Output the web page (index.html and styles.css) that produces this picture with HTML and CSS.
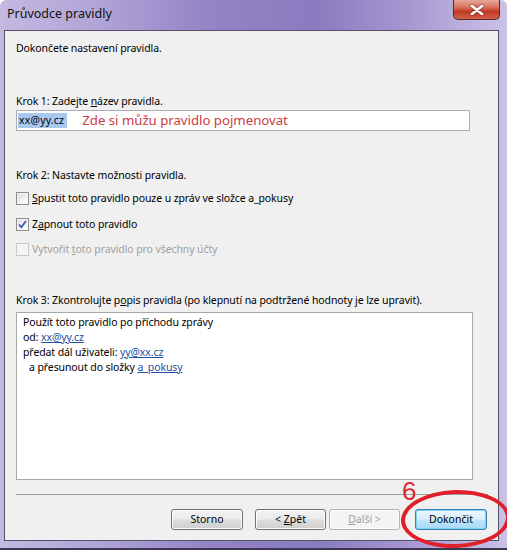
FILE: index.html
```html
<!DOCTYPE html>
<html lang="cs">
<head>
<meta charset="utf-8">
<title>Průvodce pravidly</title>
<link rel="stylesheet" href="styles.css">
</head>
<body>
<div class="window">
  <div class="titlebar">
    <span class="title">Průvodce pravidly</span>
    <span class="close"><svg viewBox="0 0 14 10" width="14" height="10"><path d="M2 1 L12 9 M12 1 L2 9" stroke="#fff" stroke-width="2.6" stroke-linecap="round"/></svg></span>
  </div>
  <div class="client">
    <div class="intro">Dokončete nastavení pravidla.</div>
    <div class="label l1">Krok 1: Zadejte <u>n</u>ázev pravidla.</div>
    <div class="input">
      <span class="sel">xx@yy.cz</span>
      <span class="note">Zde si můžu pravidlo pojmenovat</span>
    </div>
    <div class="label l2">Krok 2: Nastavte možnosti pravidla.</div>
    <div class="cbrow r1"><span class="cb"></span><span><u>S</u>pustit toto pravidlo pouze u zpráv ve složce a_pokusy</span></div>
    <div class="cbrow r2"><span class="cb checked"><svg viewBox="0 0 13 13" width="13" height="13"><path d="M3 6.5 L5.3 9.3 L10 3" fill="none" stroke="#3b5ea8" stroke-width="1.8"/></svg></span><span>Z<u>a</u>pnout toto pravidlo</span></div>
    <div class="cbrow r3 disabled"><span class="cb"></span><span>Vytvořit <u>t</u>oto pravidlo pro všechny účty</span></div>
    <div class="label l3">Krok 3: Zkontrolujte p<u>o</u>pis pravidla (po klepnutí na podtržené hodnoty je lze upravit).</div>
    <div class="desc">
      <div>Použít toto pravidlo po příchodu zprávy</div>
      <div>od: <a class="lnk">xx@yy.cz</a></div>
      <div>předat dál uživateli: <a class="lnk">yy@xx.cz</a></div>
      <div class="ind">a přesunout do složky <a class="lnk">a_pokusy</a></div>
    </div>
    <div class="sep"></div>
    <div class="buttons">
      <span class="btn storno">Storno</span>
      <span class="btn zpet">&lt; <u>Z</u>pět</span>
      <span class="btn dalsi"><u>D</u>alší &gt;</span>
      <span class="btn finish">Dokončit</span>
    </div>
  </div>
  <div class="mark6">6</div>
  <div class="ellipse"></div>
</div>
</body>
</html>
```
FILE: styles.css
```css
* { box-sizing: border-box; }
html, body { margin: 0; padding: 0; }
body {
  width: 507px;
  height: 550px;
  overflow: hidden;
  background: #ffffff;
  font-family: "Noto Sans", "Open Sans", sans-serif;
  font-size: 10.5px;
  letter-spacing: -0.1px;
  color: #000;
}
.window {
  position: relative;
  width: 507px;
  height: 550px;
  background: linear-gradient(90deg, #c4b9e0 0%, #b0a3d6 20%, #9585c6 40%, #8a7abf 62%, #a596d0 80%, #cbc2e6 100%);
  border-radius: 6px 6px 0 0;
  border-bottom: 2px solid #3a3550;
  padding: 0 8px 7px 4px;
  display: flex;
  flex-direction: column;
}
.titlebar {
  height: 30px;
  display: flex;
  align-items: flex-start;
  justify-content: space-between;
  flex: none;
}
.title {
  margin: 6px 0 0 3px;
  font-size: 12.5px;
  letter-spacing: 0;
  color: #111;
  line-height: 16px;
}
.close {
  width: 47px;
  height: 20px;
  margin-right: -1px;
  border: 1px solid #5b2b2b;
  border-top: none;
  border-radius: 0 0 5px 5px;
  background: linear-gradient(180deg, #e7a897 0%, #d6705d 40%, #c23a25 60%, #d0614a 100%);
  display: flex;
  align-items: center;
  justify-content: center;
}
.close svg { filter: drop-shadow(0 0 1px #6a2020); }
.client {
  flex: 1;
  background: #f0f0f0;
  border: 1px solid #54506a;
  padding: 0 8px 0 11px;
  display: flex;
  flex-direction: column;
  line-height: 15px;
}
.intro { margin-top: 10px; height: 15px; }
.label { height: 15px; }
.l1 { margin-top: 38px; }
.input {
  margin-top: 1px;
  width: 454px;
  height: 21px;
  background: #fff;
  border: 1px solid #abadb3;
  display: flex;
  align-items: center;
  padding-left: 1px;
}
.sel {
  background: #a7c9ee;
  padding: 0 3px 0 1px;
  letter-spacing: 0.2px;
  line-height: 15px;
}
.note {
  margin-left: 15px;
  font-size: 13.2px;
  letter-spacing: 0;
  color: #cc3b45;
  line-height: 17px;
}
.l2 { margin-top: 37px; }
.cbrow {
  display: flex;
  align-items: center;
  height: 15px;
  gap: 3px;
}
.r1 { margin-top: 8px; }
.r2 { margin-top: 11px; }
.r3 { margin-top: 10px; }
.cb {
  width: 13px;
  height: 13px;
  border: 1px solid #8f8f8f;
  background: linear-gradient(135deg, #dcdcdc 0%, #f6f6f6 70%, #fff 100%);
  box-shadow: inset 0 0 0 1px #f4f4f4;
  flex: none;
  display: flex;
}
.cb svg { margin: -1px; }
.disabled { color: #a0a0a0; }
.disabled .cb {
  border-color: #c8c8c8;
  background: #f4f4f4;
}
.l3 { margin-top: 36px; }
.desc {
  margin-top: 4px;
  width: 457px;
  height: 168px;
  background: #fff;
  border: 1px solid #a9a9a9;
  padding: 2px 0 0 6px;
  flex: none;
}
.desc div { height: 15px; }
.desc .ind { padding-left: 6px; }
.lnk {
  color: #1f4fa0;
  text-decoration: underline;
}
.sep {
  height: 1px;
  margin-top: 14px;
  width: 472px;
  background: #a0a0a0;
  flex: none;
}
.buttons {
  margin-top: 14px;
  display: flex;
  justify-content: flex-end;
  padding-right: 3px;
}
.btn {
  height: 21px;
  width: 72px;
  border: 1px solid #707070;
  border-radius: 3px;
  background: linear-gradient(180deg, #f2f2f2 0%, #ebebeb 48%, #dddddd 52%, #cfcfcf 100%);
  box-shadow: inset 0 0 0 1px #fcfcfc;
  text-align: center;
  line-height: 19px;
  letter-spacing: 0;
}
.zpet { margin-left: 12px; width: 71px; }
.dalsi {
  margin-left: 3px;
  width: 71px;
  color: #a0a0a0;
  border-color: #adb2b5;
  background: #f4f4f4;
}
.finish {
  margin-left: 15px;
  border-color: #3c7fb1;
  background: linear-gradient(180deg, #eaf6fd 0%, #d9f0fc 48%, #bee6fd 52%, #a7d9f5 100%);
  box-shadow: inset 0 0 0 1px #7ed0f0;
}
.mark6 {
  position: absolute;
  left: 402px;
  top: 477px;
  font-family: "Liberation Sans", sans-serif;
  font-size: 26px;
  line-height: 28px;
  color: #e0262f;
}
.ellipse {
  position: absolute;
  left: 401px;
  top: 490px;
  width: 109px;
  height: 58px;
  border: 4px solid #e01f2b;
  border-radius: 50%;
  transform: rotate(-2deg);
}
```
